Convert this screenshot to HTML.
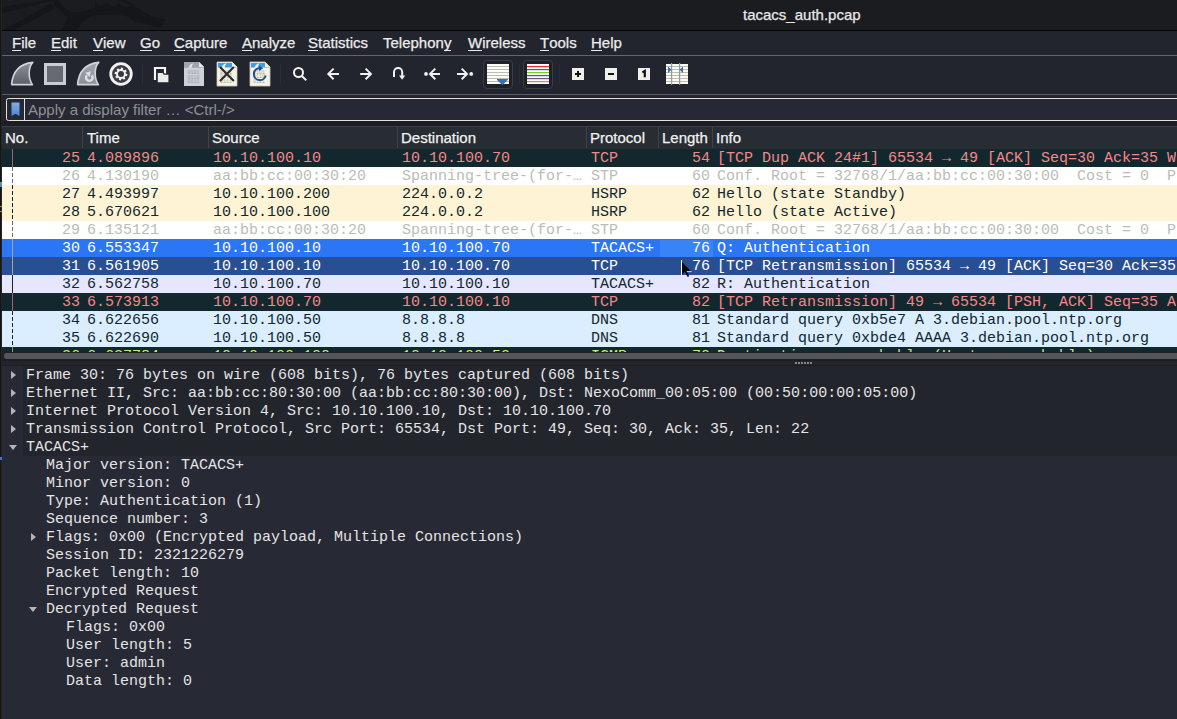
<!DOCTYPE html>
<html><head><meta charset="utf-8">
<style>
*{margin:0;padding:0;box-sizing:border-box}
html,body{width:1177px;height:719px;overflow:hidden;background:#23252e}
body{position:relative;font-family:"Liberation Sans",sans-serif;font-size:15px;color:#e6e6e6}
.abs{position:absolute}
#title{left:0;top:0;width:1177px;height:30px;background:#1b1c20;overflow:hidden}
#titleline{left:0;top:30px;width:1177px;height:1px;background:#050506}
#ttext{left:743px;top:6px;color:#e8e8e8;white-space:nowrap;line-height:18px;-webkit-text-stroke:0.25px #e8e8e8}
#menu{left:0;top:31px;width:1177px;height:24px;background:#23252e}
.mi{position:absolute;top:3px;line-height:18px;color:#ececec;white-space:nowrap;-webkit-text-stroke:0.25px #ececec}
.mi u{text-decoration:none;border-bottom:1px solid #ececec;display:inline-block;line-height:14px}
#sep1{left:2px;top:55px;width:1175px;height:1px;background:#62656c}
#tool{left:0;top:56px;width:1177px;height:38px;background:#23252e}
#sep2{left:2px;top:94px;width:1175px;height:1px;background:#5a5d64}
#fbar{left:0;top:95px;width:1177px;height:31px;background:#23252e}
#filter{left:6px;top:98px;width:1180px;height:23px;border:1px solid #e4e1d6;border-radius:2.5px;background:#262933}
#fdiv{left:24px;top:99px;width:1px;height:21px;background:#e4e1d6}
#ftext{left:28px;top:101px;color:#8e8f93;line-height:18px;white-space:nowrap}
#strip{left:0;top:121px;width:1177px;height:5px;background:#1c1e23}
#hdr{left:2px;top:126px;width:1175px;height:23px;background:#282c33;border-top:1px solid #3c3f48}
.hc{position:absolute;top:2px;line-height:18px;color:#f2f2f2;white-space:nowrap;-webkit-text-stroke:0.25px #f2f2f2}
.hs{position:absolute;top:0;width:1px;height:21px;background:#3f424a}
#list{left:2px;top:149px;width:1175px;height:203px;overflow:hidden;background:#fff}
.r{position:absolute;left:0;width:1175px;height:18px;font-family:"Liberation Mono",monospace;font-size:15px;line-height:18px;white-space:pre;overflow:hidden}
.r span{position:absolute;top:1px}
#lstrip{left:0;top:0;width:2px;height:719px;background:linear-gradient(to right,#141414 0 1px,#252525 1px 2px)}
#hscroll{left:2px;top:352px;width:1175px;height:8px;background:#1f2127}
#hthumb{left:4px;top:353px;width:1180px;height:6px;border-radius:3px;background:#54565b}
#split{left:2px;top:359px;width:1175px;height:7px;background:#22252c;border-top:2px solid #1c1e22;border-bottom:1px solid #1b1d22}
#detail{left:2px;top:366px;width:1175px;height:353px;background:#272934}
.d{position:absolute;left:0;width:1175px;height:18px;font-family:"Liberation Mono",monospace;font-size:15px;line-height:18px;white-space:pre;color:#e4e4e4}
.d.top::after{content:"";position:absolute;left:21px;top:0;right:0;bottom:0;background:#23252d;z-index:0}
.d span{position:absolute;top:1px;z-index:1}
.arr{position:absolute;z-index:1;width:0;height:0}
.ar{border-top:4px solid transparent;border-bottom:4px solid transparent;border-left:5px solid #b4b4b4;top:5px}
.ad{border-left:4px solid transparent;border-right:4px solid transparent;border-top:5px solid #b4b4b4;top:7px}
</style></head><body>
<div id="title" class="abs">
<svg width="200" height="30" style="position:absolute;left:0;top:0" viewBox="0 0 200 30">
 <g fill="#151619">
  <path d="M0 7.8 L46 0 L54 0 L0 13.8 Z"/>
  <path d="M3 30 L51 3.4 L55 8 L15 30 Z"/>
  <path d="M52.5 0 L58 0 Q66 12.5 76 12.5 Q86 11.5 95 7.5 Q96 4 94.5 0.8 Q97.5 5 100 6.3 L103 5.5 Q108 4 106 0.8 Q110 5 112 6.2 L116 5.8 Q119 4 117 1 Q121 6 125 7 L134 5.5 Q140 9 143 12 L149 14.5 L152 17 L166 19.5 L160 28 L146 23.5 L133 21.5 Q130 16 120 15 Q105 13.5 92 16 Q82 20 77 30 L62 30 L68 17.5 Q57 11 52.5 0 Z"/>
  <path d="M119 0 L124 0 L134 4.5 L131 6 Z"/>
 </g>
 <path d="M140 13 L146 16.5" stroke="#1b1c20" stroke-width="1.2"/>
</svg>
<div id="ttext" class="abs">tacacs_auth.pcap</div>
</div>
<div id="titleline" class="abs"></div>
<div id="menu" class="abs">
 <div class="mi" style="left:12px"><u>F</u>ile</div>
 <div class="mi" style="left:51px"><u>E</u>dit</div>
 <div class="mi" style="left:93px"><u>V</u>iew</div>
 <div class="mi" style="left:140px"><u>G</u>o</div>
 <div class="mi" style="left:174px"><u>C</u>apture</div>
 <div class="mi" style="left:242px"><u>A</u>nalyze</div>
 <div class="mi" style="left:308px"><u>S</u>tatistics</div>
 <div class="mi" style="left:383px">Telephon<u>y</u></div>
 <div class="mi" style="left:468px"><u>W</u>ireless</div>
 <div class="mi" style="left:540px"><u>T</u>ools</div>
 <div class="mi" style="left:591px"><u>H</u>elp</div>
</div>
<div id="sep1" class="abs"></div>
<div id="tool" class="abs">
<svg style="position:absolute;left:0;top:0" width="700" height="38" viewBox="0 56 700 38">
<defs>
<linearGradient id="fin" x1="0" y1="0" x2="0" y2="1"><stop offset="0" stop-color="#8d9096"/><stop offset="1" stop-color="#5c5f67"/></linearGradient>
<linearGradient id="fin2" x1="0" y1="0" x2="0" y2="1"><stop offset="0" stop-color="#a3a6ad"/><stop offset="1" stop-color="#8c8f96"/></linearGradient>
</defs>
<!-- start fin -->
<path d="M11.6 84.6 Q13.2 64.6 32.8 62.4 C28.6 66.5 27.6 78 32.4 84.6 Z" fill="url(#fin)" stroke="#d2d4da" stroke-width="1.6" stroke-linejoin="round"/>
<!-- stop -->
<rect x="45.5" y="64.5" width="19" height="19" fill="#676a72" stroke="#c9ccd3" stroke-width="3"/>
<!-- restart fin -->
<path d="M77.6 84.6 Q79.2 64.6 98.8 62.4 C94.6 66.5 93.6 78 98.4 84.6 Z" fill="url(#fin2)" stroke="#d2d4da" stroke-width="1.6" stroke-linejoin="round"/>
<path d="M87 75.3 A3.3 3.3 0 1 0 91.7 75.3" fill="none" stroke="#dcdee3" stroke-width="2.4"/>
<path d="M85.2 72.7 L90.8 71.3 L89.7 77 Z" fill="#dcdee3"/>
<!-- options gear -->
<circle cx="121" cy="74" r="10.3" fill="#3d3d3f" stroke="#f2f2f2" stroke-width="2.8"/>
<g fill="#f2f2f2" transform="translate(121 74) rotate(10)">
 <circle r="4.9"/>
 <rect x="-1.1" y="-6.3" width="2.2" height="12.6"/>
 <rect x="-1.1" y="-6.3" width="2.2" height="12.6" transform="rotate(45)"/>
 <rect x="-1.1" y="-6.3" width="2.2" height="12.6" transform="rotate(90)"/>
 <rect x="-1.1" y="-6.3" width="2.2" height="12.6" transform="rotate(135)"/>
</g>
<circle cx="121" cy="74" r="3" fill="#38383a"/>
<!-- separator -->
<rect x="142" y="64" width="1" height="20" fill="#2c2f37"/>
<!-- open -->
<path d="M155 80 V68 H165 V79" fill="none" stroke="#f4f4f4" stroke-width="2.2"/>
<path d="M156.5 72 H163 L164.5 73.5 H169.5 V83.5 H156.5 Z" fill="#22252d"/>
<path d="M157.8 73 H162.6 L163.8 74.8 H168.4 V82.3 H157.8 Z" fill="#ebebea"/>
<!-- gray doc -->
<path d="M184 62 H199 L204 67 V86 H184 Z" fill="#cdd0d8"/>
<path d="M184 62 H199 L204 67 V67.8 H184 Z" fill="#a0a3aa"/>
<path d="M199 62 V67 H204 Z" fill="#e4e6ea"/>
<path d="M188.5 67.8 Q189.5 63.8 193.5 63.2 Q191.5 65.5 192 67.8 Z" fill="#dfe1e6"/>
<g fill="#9a9ca3" font-family="Liberation Mono" font-size="5px">
 <text x="187.5" y="74">0101</text><text x="187.5" y="78.5">0110</text><text x="187.5" y="83">0111</text>
</g>
<!-- close doc -->
<path d="M217 62 H232 L237 67 V86 H217 Z" fill="#f5f4e4" stroke="#c9c8b6" stroke-width="0.8"/>
<path d="M218 63 H232 L236.5 67.5 H218 Z" fill="#3a9fe6"/>
<path d="M232 62 V67 H237 Z" fill="#f0efe0"/>
<path d="M221.5 67.8 Q222.5 63.8 226.5 63.2 Q224.5 65.5 225 67.8 Z" fill="#f4f4ee"/>
<g fill="#a8a79a" font-family="Liberation Mono" font-size="5px"><text x="220" y="73.5">0101</text><text x="220" y="78.3">0110</text><text x="220" y="83">0111</text></g>
<path d="M220.5 67.5 L233.3 80.4 M233.3 67.5 L220.5 80.4" stroke="#2b2b2b" stroke-width="2.1" stroke-linecap="round"/>
<!-- reload doc -->
<path d="M250 62 H265 L270 67 V86 H250 Z" fill="#f5f4e4" stroke="#c9c8b6" stroke-width="0.8"/>
<path d="M251 63 H265 L269.5 67.5 H251 Z" fill="#3a9fe6"/>
<path d="M265 62 V67 H270 Z" fill="#f0efe0"/>
<path d="M254.5 67.8 Q255.5 63.8 259.5 63.2 Q257.5 65.5 258 67.8 Z" fill="#f4f4ee"/>
<g fill="#a8a79a" font-family="Liberation Mono" font-size="5px"><text x="253" y="73.5">0101</text><text x="253" y="78.3">0110</text><text x="253" y="83">0111</text></g>
<path d="M259 68.2 A6 6 0 1 0 265.7 75.5" fill="none" stroke="#1f4b9b" stroke-width="2"/>
<path d="M259 65.8 L263.2 68.2 L259 71 Z" fill="#1f4b9b"/>
<!-- separator -->
<rect x="280" y="64" width="1" height="20" fill="#2c2f37"/>
<g stroke="#f2f2f2" stroke-width="2" fill="none" stroke-linecap="butt">
<!-- search -->
<circle cx="298.5" cy="72.5" r="4.5"/>
<path d="M301.8 76 L306.3 80.3"/>
<!-- back -->
<path d="M328 73.9 H339 M333.6 68.6 L328.3 73.9 L333.6 79.2"/>
<!-- fwd -->
<path d="M360.2 73.9 H371.2 M365.6 68.6 L370.9 73.9 L365.6 79.2"/>
<!-- goto -->
<path d="M394 77 V72 A4.1 4.1 0 0 1 402.2 72 V76"/>
<!-- first -->
<path d="M430 73.9 H440 M435.3 68.6 L430 73.9 L435.3 79.2"/>
<!-- last -->
<path d="M457 73.9 H467 M461.7 68.6 L467 73.9 L461.7 79.2"/>
</g>
<path d="M399 75.5 H405.2 L402.1 79.8 Z" fill="#f2f2f2"/>
<circle cx="426" cy="73.9" r="1.9" fill="#f2f2f2"/>
<circle cx="471.2" cy="73.9" r="1.9" fill="#f2f2f2"/>
<!-- autoscroll -->
<rect x="483.5" y="60.5" width="29" height="28" rx="3.5" fill="#1f2128" stroke="#3a3d45"/>
<rect x="487" y="64" width="22" height="20" fill="#fbfbf8"/>
<g fill="#bcbcb0"><rect x="487" y="66" width="22" height="1"/><rect x="487" y="69" width="22" height="1"/><rect x="487" y="72" width="22" height="1"/><rect x="487" y="75" width="22" height="1"/><rect x="487" y="78" width="22" height="1"/><rect x="487" y="81" width="22" height="1"/></g>
<path d="M497.5 79.5 H507.3 L502.4 84.4 Z" fill="#3a70b7" stroke="#3a70b7" stroke-width="1.2" stroke-linejoin="round"/>
<rect x="519" y="64" width="1" height="20" fill="#2c2f37"/>
<!-- colorize -->
<rect x="523.5" y="60.5" width="29" height="28" rx="3.5" fill="#1f2128" stroke="#3a3d45"/>
<rect x="527" y="64" width="22" height="20" fill="#fbfbfd"/>
<rect x="527" y="66" width="22" height="1.2" fill="#ef2929"/>
<rect x="527" y="69" width="22" height="1.2" fill="#3465a4"/>
<rect x="527" y="72" width="22" height="1.2" fill="#73d216"/>
<rect x="527" y="75" width="22" height="1.2" fill="#3465a4"/>
<rect x="527" y="78" width="22" height="1.2" fill="#75507b"/>
<rect x="527" y="81" width="22" height="1.2" fill="#c4a000"/>
<rect x="559" y="64" width="1" height="20" fill="#2c2f37"/>
<!-- zoom in/out/normal -->
<rect x="572" y="68" width="12" height="12" fill="#efefec"/>
<path d="M575 74 H581 M578 71 V77" stroke="#111" stroke-width="2"/>
<rect x="605" y="68" width="12" height="12" fill="#efefec"/>
<path d="M608 74 H614" stroke="#111" stroke-width="2"/>
<rect x="638" y="68" width="12" height="12" fill="#efefec"/>
<path d="M642.4 72.4 L644.8 71 V77.2" stroke="#111" stroke-width="2.2" fill="none"/>
<!-- resize -->
<rect x="666" y="64" width="22" height="20" fill="#fbfbf8"/>
<g fill="#bcbcb0"><rect x="666" y="66" width="22" height="1"/><rect x="666" y="69" width="22" height="1"/><rect x="666" y="72" width="22" height="1"/><rect x="666" y="75" width="22" height="1"/><rect x="666" y="78" width="22" height="1"/><rect x="666" y="81" width="22" height="1"/></g>
<rect x="671" y="63" width="1.2" height="22" fill="#9a9a92"/>
<rect x="679" y="63" width="1.2" height="22" fill="#9a9a92"/>
<path d="M668 66.5 L671.5 69.8 L668 73 Z" fill="#3a70b7"/>
<path d="M683 66.5 L679.6 69.8 L683 73 Z" fill="#3a70b7"/>
</svg>

</div>
<div id="sep2" class="abs"></div>
<div id="fbar" class="abs"></div>
<div id="filter" class="abs"></div>
<div id="fdiv" class="abs"></div>
<svg class="abs" style="left:10.5px;top:102px" width="9" height="15" viewBox="0 0 9 15"><defs><linearGradient id="bm" x1="0" y1="0" x2="0" y2="1"><stop offset="0" stop-color="#7fb0e6"/><stop offset="1" stop-color="#4a86cc"/></linearGradient></defs><path d="M0.5 0.5 H8.5 V14 L4.5 11.8 L0.5 14 Z" fill="url(#bm)"/></svg>
<div id="ftext" class="abs">Apply a display filter … &lt;Ctrl-/&gt;</div>
<div id="strip" class="abs"></div>
<div id="hdr" class="abs">
 <div class="hc" style="left:3px">No.</div>
 <div class="hs" style="left:80px"></div>
 <div class="hc" style="left:85px">Time</div>
 <div class="hs" style="left:206px"></div>
 <div class="hc" style="left:210px">Source</div>
 <div class="hs" style="left:395px"></div>
 <div class="hc" style="left:399px">Destination</div>
 <div class="hs" style="left:584px"></div>
 <div class="hc" style="left:588px">Protocol</div>
 <div class="hs" style="left:656px"></div>
 <div class="hc" style="left:660px">Length</div>
 <div class="hs" style="left:710px"></div>
 <div class="hc" style="left:714px">Info</div>
</div>
<div id="list" class="abs">
<div class="r" style="top:0px;background:#12272e;color:#f78787"><i style="position:absolute;left:10px;top:0;width:1px;height:18px;background:#a86262"></i><span style="left:60px">25</span><span style="left:85px">4.089896</span><span style="left:211px">10.10.100.10</span><span style="left:400px">10.10.100.70</span><span style="left:589px">TCP</span><span style="left:690px">54</span><span style="left:715px;width:459px;overflow:hidden">[TCP Dup ACK 24#1] 65534 → 49 [ACK] Seq=30 Ack=35 Win=65535 Len=0</span></div>
<div class="r" style="top:18px;background:#ffffff;color:#babdb6"><i style="position:absolute;left:10px;top:0;width:1px;height:18px;background:repeating-linear-gradient(to bottom,#6e6e6e 0 4px,transparent 4px 6px)"></i><span style="left:60px">26</span><span style="left:85px">4.130190</span><span style="left:211px">aa:bb:cc:00:30:20</span><span style="left:400px">Spanning-tree-(for-…</span><span style="left:589px">STP</span><span style="left:690px">60</span><span style="left:715px;width:459px;overflow:hidden">Conf. Root = 32768/1/aa:bb:cc:00:30:00  Cost = 0  Port = 0x8001</span></div>
<div class="r" style="top:36px;background:#fff3d6;color:#12272e"><i style="position:absolute;left:10px;top:0;width:1px;height:18px;background:repeating-linear-gradient(to bottom,#12272e 0 4px,transparent 4px 6px)"></i><span style="left:60px">27</span><span style="left:85px">4.493997</span><span style="left:211px">10.10.100.200</span><span style="left:400px">224.0.0.2</span><span style="left:589px">HSRP</span><span style="left:690px">62</span><span style="left:715px;width:459px;overflow:hidden">Hello (state Standby)</span></div>
<div class="r" style="top:54px;background:#fff3d6;color:#12272e"><i style="position:absolute;left:10px;top:0;width:1px;height:18px;background:repeating-linear-gradient(to bottom,#12272e 0 4px,transparent 4px 6px)"></i><span style="left:60px">28</span><span style="left:85px">5.670621</span><span style="left:211px">10.10.100.100</span><span style="left:400px">224.0.0.2</span><span style="left:589px">HSRP</span><span style="left:690px">62</span><span style="left:715px;width:459px;overflow:hidden">Hello (state Active)</span></div>
<div class="r" style="top:72px;background:#ffffff;color:#babdb6"><i style="position:absolute;left:10px;top:0;width:1px;height:18px;background:repeating-linear-gradient(to bottom,#6e6e6e 0 4px,transparent 4px 6px)"></i><span style="left:60px">29</span><span style="left:85px">6.135121</span><span style="left:211px">aa:bb:cc:00:30:20</span><span style="left:400px">Spanning-tree-(for-…</span><span style="left:589px">STP</span><span style="left:690px">60</span><span style="left:715px;width:459px;overflow:hidden">Conf. Root = 32768/1/aa:bb:cc:00:30:00  Cost = 0  Port = 0x8001</span></div>
<div class="r" style="top:90px;background:#2a76f4;color:#ffffff"><i style="position:absolute;left:10px;top:0;width:1px;height:18px;background:#a4a4a4"></i><i style="position:absolute;left:658px;top:1px;width:53px;height:17px;background:#3883f6"></i><span style="left:60px">30</span><span style="left:85px">6.553347</span><span style="left:211px">10.10.100.10</span><span style="left:400px">10.10.100.70</span><span style="left:589px">TACACS+</span><span style="left:690px">76</span><span style="left:715px;width:459px;overflow:hidden">Q: Authentication</span></div>
<div class="r" style="top:108px;background:#284f94;color:#ffffff"><i style="position:absolute;left:10px;top:0;width:1px;height:18px;background:#a4a4a4"></i><span style="left:60px">31</span><span style="left:85px">6.561905</span><span style="left:211px">10.10.100.10</span><span style="left:400px">10.10.100.70</span><span style="left:589px">TCP</span><span style="left:690px">76</span><span style="left:715px;width:459px;overflow:hidden">[TCP Retransmission] 65534 → 49 [ACK] Seq=30 Ack=35 Len=22</span></div>
<div class="r" style="top:126px;background:#e7e6ff;color:#12272e"><i style="position:absolute;left:10px;top:0;width:1px;height:18px;background:#12272e"></i><span style="left:60px">32</span><span style="left:85px">6.562758</span><span style="left:211px">10.10.100.70</span><span style="left:400px">10.10.100.10</span><span style="left:589px">TACACS+</span><span style="left:690px">82</span><span style="left:715px;width:459px;overflow:hidden">R: Authentication</span></div>
<div class="r" style="top:144px;background:#12272e;color:#f78787"><i style="position:absolute;left:10px;top:0;width:1px;height:18px;background:#a86262"></i><span style="left:60px">33</span><span style="left:85px">6.573913</span><span style="left:211px">10.10.100.70</span><span style="left:400px">10.10.100.10</span><span style="left:589px">TCP</span><span style="left:690px">82</span><span style="left:715px;width:459px;overflow:hidden">[TCP Retransmission] 49 → 65534 [PSH, ACK] Seq=35 Ack=52 Len=28</span></div>
<div class="r" style="top:162px;background:#daeeff;color:#12272e"><i style="position:absolute;left:10px;top:0;width:1px;height:18px;background:repeating-linear-gradient(to bottom,#12272e 0 4px,transparent 4px 6px)"></i><span style="left:60px">34</span><span style="left:85px">6.622656</span><span style="left:211px">10.10.100.50</span><span style="left:400px">8.8.8.8</span><span style="left:589px">DNS</span><span style="left:690px">81</span><span style="left:715px;width:459px;overflow:hidden">Standard query 0xb5e7 A 3.debian.pool.ntp.org</span></div>
<div class="r" style="top:180px;background:#daeeff;color:#12272e"><i style="position:absolute;left:10px;top:0;width:1px;height:18px;background:repeating-linear-gradient(to bottom,#12272e 0 4px,transparent 4px 6px)"></i><span style="left:60px">35</span><span style="left:85px">6.622690</span><span style="left:211px">10.10.100.50</span><span style="left:400px">8.8.8.8</span><span style="left:589px">DNS</span><span style="left:690px">81</span><span style="left:715px;width:459px;overflow:hidden">Standard query 0xbde4 AAAA 3.debian.pool.ntp.org</span></div>
<div class="r" style="top:198px;background:#12272e;color:#b7f774"><i style="position:absolute;left:10px;top:0;width:1px;height:18px;background:#7aa552"></i><span style="left:60px">36</span><span style="left:85px">6.637784</span><span style="left:211px">10.10.100.100</span><span style="left:400px">10.10.100.50</span><span style="left:589px">ICMP</span><span style="left:690px">70</span><span style="left:715px;width:459px;overflow:hidden">Destination unreachable (Host unreachable)</span></div>
</div>
<div id="hscroll" class="abs"></div>
<div id="hthumb" class="abs"></div>
<div id="split" class="abs"></div>
<div id="detail" class="abs">
<div class="d top" style="top:0px"><i class="arr ar" style="left:9px"></i><span style="left:24px">Frame 30: 76 bytes on wire (608 bits), 76 bytes captured (608 bits)</span></div>
<div class="d top" style="top:18px"><i class="arr ar" style="left:9px"></i><span style="left:24px">Ethernet II, Src: aa:bb:cc:80:30:00 (aa:bb:cc:80:30:00), Dst: NexoComm_00:05:00 (00:50:00:00:05:00)</span></div>
<div class="d top" style="top:36px"><i class="arr ar" style="left:9px"></i><span style="left:24px">Internet Protocol Version 4, Src: 10.10.100.10, Dst: 10.10.100.70</span></div>
<div class="d top" style="top:54px"><i class="arr ar" style="left:9px"></i><span style="left:24px">Transmission Control Protocol, Src Port: 65534, Dst Port: 49, Seq: 30, Ack: 35, Len: 22</span></div>
<div class="d top" style="top:72px"><i class="arr ad" style="left:7px"></i><span style="left:24px">TACACS+</span></div>
<div class="d" style="top:90px"><span style="left:44px">Major version: TACACS+</span></div>
<div class="d" style="top:108px"><span style="left:44px">Minor version: 0</span></div>
<div class="d" style="top:126px"><span style="left:44px">Type: Authentication (1)</span></div>
<div class="d" style="top:144px"><span style="left:44px">Sequence number: 3</span></div>
<div class="d" style="top:162px"><i class="arr ar" style="left:29px"></i><span style="left:44px">Flags: 0x00 (Encrypted payload, Multiple Connections)</span></div>
<div class="d" style="top:180px"><span style="left:44px">Session ID: 2321226279</span></div>
<div class="d" style="top:198px"><span style="left:44px">Packet length: 10</span></div>
<div class="d" style="top:216px"><span style="left:44px">Encrypted Request</span></div>
<div class="d" style="top:234px"><i class="arr ad" style="left:27px"></i><span style="left:44px">Decrypted Request</span></div>
<div class="d" style="top:252px"><span style="left:64px">Flags: 0x00</span></div>
<div class="d" style="top:270px"><span style="left:64px">User length: 5</span></div>
<div class="d" style="top:288px"><span style="left:64px">User: admin</span></div>
<div class="d" style="top:306px"><span style="left:64px">Data length: 0</span></div>
</div>
<div id="lstrip" class="abs"></div>
<i class="abs" style="left:0;top:182px;width:2px;height:2px;background:#6a9a7a"></i>
<i class="abs" style="left:0;top:184px;width:2px;height:3px;background:#4a8ad0"></i>
<i class="abs" style="left:0;top:206px;width:2px;height:1px;background:#c07a30"></i>
<i class="abs" style="left:0;top:211px;width:2px;height:1px;background:#c07a30"></i>
<i class="abs" style="left:0;top:457px;width:2px;height:3px;background:#3a7ad0"></i>
<svg class="abs" style="left:678px;top:258px" width="16" height="22" viewBox="678 258 16 22"><path d="M681.5 260 V275" stroke="#fff" stroke-width="1"/><path d="M682 262 L682 274.5 L685 271.8 L687.6 277 L689.2 276.2 L686.8 271.3 L691 271.3 Z" fill="#0a0a0a"/><path d="M686.8 271.6 H691.5" stroke="#fff" stroke-width="0.8"/></svg>
<div class="abs" style="left:795px;top:362px;width:17px;height:2px;background:repeating-linear-gradient(to right,#86878c 0 2px,transparent 2px 3px)"></div>
</body></html>
